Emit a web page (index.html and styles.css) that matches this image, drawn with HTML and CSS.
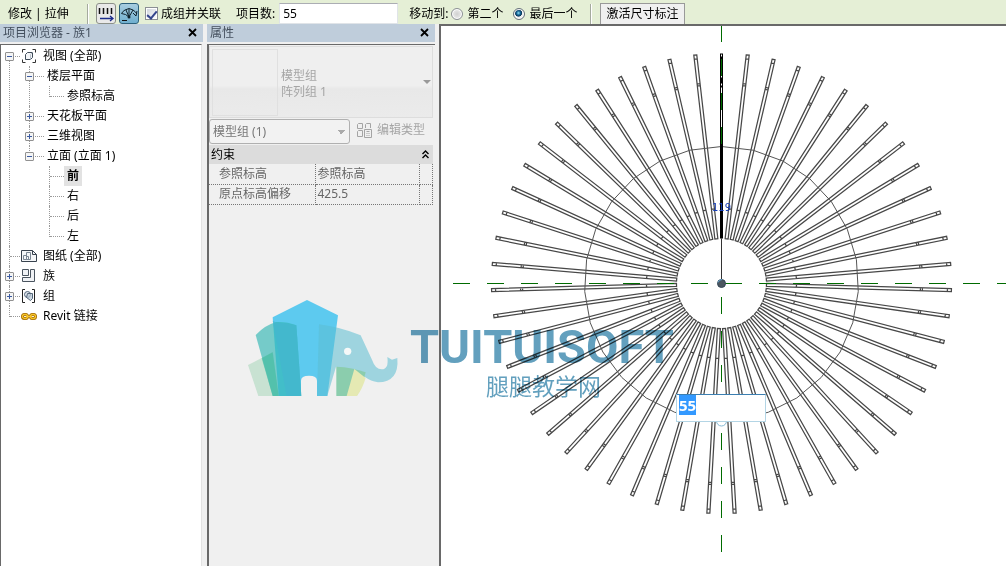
FILE: index.html
```html
<!DOCTYPE html>
<html lang="zh-CN">
<head>
<meta charset="utf-8">
<title>族1</title>
<link rel="stylesheet" href="styles.css">
</head>
<body>
<div class="app">
  <header class="options">
    <span class="mode">修改 | 拉伸</span>
    <span class="rule"></span>
    <button class="tool" type="button" aria-label="线性阵列">
      <svg width="18" height="20" viewBox="0 0 18 20"><path d="M2.500 4v6M6.500 4v6M10.500 4v6M14.500 4v6" stroke="#111" stroke-width="1.500"/><path d="M3 14.500h13M13 12l3 2.500-3 2.500" fill="none" stroke="#1c2c8c" stroke-width="1.300"/></svg>
    </button>
    <button class="tool tool-on" type="button" aria-label="半径阵列">
      <svg width="18" height="20" viewBox="0 0 18 20"><path d="M1.500 9.500Q3 7 5 6L9 4.500l4 1.500q3 2 4 4M1.500 9.500l4 1L9 13 6 6M9 13l4-7M9 5v7" fill="none" stroke="#10222c"/><path d="M13 9l3 3 1-5" fill="none" stroke="#10222c"/><circle cx="9" cy="13" r="1.500" fill="#10222c"/><path d="M2 16.500h5" stroke="#111"/></svg>
    </button>
    <label class="choice group"><input type="checkbox" checked><span>成组并关联</span></label>
    <label class="count"><span>项目数:</span><input type="text" value="55"></label>
    <div class="move" role="radiogroup" aria-label="移动到">
      <span>移动到:</span>
      <label class="choice"><input type="radio" name="move"><span>第二个</span></label>
      <label class="choice last"><input type="radio" name="move" checked><span>最后一个</span></label>
    </div>
    <span class="rule"></span>
    <button class="activate" type="button">激活尺寸标注</button>
  </header>

  <main class="work">
    <section class="panel browser">
      <div class="title"><h2>项目浏览器 - 族1</h2><button type="button" aria-label="关闭"><svg width="9" height="9" viewBox="0 0 9 9"><path d="M1 1l7 7M8 1l-7 7" stroke="#000" stroke-width="1.800"/></svg></button></div>
      <div class="panel-body tree-body">
        <ul class="tree">
          <li><div class="row"><span class="branch"><button type="button" class="exp" aria-label="折叠"></button></span>
            <svg class="icon" width="16" height="16" viewBox="0 0 16 16"><path d="M4.500 1.500h-3v3M11.500 1.500h3v3M1.500 11.500v3h3M14.500 11.500v3h-3" fill="none" stroke="#333"/><path d="M4.500 6.500l2-2h5v5l-2 2h-5z" fill="#f3f5f8" stroke="#3f4b59"/><path d="M9.500 11.500v-5l2-2" fill="none" stroke="#b8c0ca"/></svg><span class="name">视图 (全部)</span></div>
            <ul>
              <li><div class="row"><span class="branch"><button type="button" class="exp" aria-label="折叠"></button></span><span class="name">楼层平面</span></div>
                <ul><li><div class="row"><span class="branch"></span><span class="name">参照标高</span></div></li></ul></li>
              <li><div class="row"><span class="branch"><button type="button" class="exp plus" aria-label="展开"></button></span><span class="name">天花板平面</span></div></li>
              <li><div class="row"><span class="branch"><button type="button" class="exp plus" aria-label="展开"></button></span><span class="name">三维视图</span></div></li>
              <li><div class="row"><span class="branch"><button type="button" class="exp" aria-label="折叠"></button></span><span class="name">立面 (立面 1)</span></div>
                <ul>
                  <li><div class="row"><span class="branch"></span><span class="name current">前</span></div></li>
                  <li><div class="row"><span class="branch"></span><span class="name">右</span></div></li>
                  <li><div class="row"><span class="branch"></span><span class="name">后</span></div></li>
                  <li><div class="row"><span class="branch"></span><span class="name">左</span></div></li>
                </ul></li>
            </ul></li>
          <li><div class="row"><span class="branch"></span>
            <svg class="icon" width="16" height="16" viewBox="0 0 16 16"><path d="M.5 2.500h11l4 4v7H.5z" fill="#f4f6f8" stroke="#38424e"/><path d="M11.500 2.500v4h4" fill="none" stroke="#38424e"/><path d="M2.500 7.500h3v4h-3zM5.500 4.500h4v7h-4zM5.500 8.500h2v3" fill="none" stroke="#7b8794"/></svg><span class="name">图纸 (全部)</span></div></li>
          <li><div class="row"><span class="branch"><button type="button" class="exp plus" aria-label="展开"></button></span>
            <svg class="icon" width="16" height="16" viewBox="0 0 16 16"><path d="M1.500 1.500h6v6h-6zM9.500 1.500h4v12h-12v-4h8z" fill="#f0f2f5" stroke="#4a545f"/></svg><span class="name">族</span></div></li>
          <li><div class="row"><span class="branch"><button type="button" class="exp plus" aria-label="展开"></button></span>
            <svg class="icon" width="16" height="16" viewBox="0 0 16 16"><path d="M4 1.500H1.500v13H4M11 1.500h2.500v13H11" fill="none" stroke="#222"/><circle cx="6.500" cy="6.500" r="3" fill="#dde4ec" stroke="#536579"/><path d="M6.500 5.500h5v5l-2 2-4-3z" fill="#b8c7d6" fill-opacity=".7" stroke="#536579"/></svg><span class="name">组</span></div></li>
          <li><div class="row"><span class="branch"></span>
            <svg class="icon" width="16" height="16" viewBox="0 0 16 16"><g fill="none" stroke="#a36a00" stroke-width="3"><rect x="1.500" y="6.500" width="5" height="4" rx="2"/><rect x="9.500" y="6.500" width="5" height="4" rx="2"/></g><g fill="none" stroke="#f6c52c" stroke-width="1.300"><rect x="1.500" y="6.500" width="5" height="4" rx="2"/><rect x="9.500" y="6.500" width="5" height="4" rx="2"/><path d="M5 8.500h6"/></g></svg><span class="name">Revit 链接</span></div></li>
        </ul>
      </div>
    </section>

    <section class="panel props">
      <div class="title"><h2>属性</h2><button type="button" aria-label="关闭"><svg width="9" height="9" viewBox="0 0 9 9"><path d="M1 1l7 7M8 1l-7 7" stroke="#000" stroke-width="1.800"/></svg></button></div>
      <div class="panel-body">
        <button class="type" type="button" disabled>
          <span class="thumb"></span><span class="type-name">模型组<br>阵列组 1</span><span class="arrow"></span>
        </button>
        <div class="filter">
          <select aria-label="类别" disabled><option>模型组 (1)</option></select>
          <button class="edit" type="button" disabled>
            <svg width="17" height="17" viewBox="0 0 17 17" fill="none" stroke="#a4a4a4"><path d="M1.500 2.500l1-1h4v5h-5zM1.500 9.500l1-1h4v6h-5zM9.500 6V2.500l1-1h4V6M8.500 7.500h7v8h-7z"/><path d="M10.500 9.500h3M10.500 11.500h1M12.500 11.500h1M10.500 13.500h1M12.500 13.500h1"/></svg><span>编辑类型</span>
          </button>
        </div>
        <table class="grid">
          <colgroup><col class="c-name"><col><col class="c-end"></colgroup>
          <thead><tr><th colspan="2">约束</th><th><svg width="7" height="9" viewBox="0 0 7 9"><path d="M.5 4l3-3 3 3M.5 8l3-3 3 3" fill="none" stroke="#000" stroke-width="1.400"/></svg></th></tr></thead>
          <tbody><tr><td>参照标高</td><td>参照标高</td><td></td></tr><tr><td>原点标高偏移</td><td>425.5</td><td></td></tr></tbody>
        </table>
      </div>
    </section>

    <section class="canvas">
      <svg class="drawing" aria-label="前立面">
        <g id="array" transform="translate(280.500 257.500)" fill="none" stroke="#555">
          <g id="spokes" stroke="#484848" stroke-width="1.250"></g>
          <polygon id="path"/>
          <path d="M0-45V0" stroke="#333"/>
          <path d="M0-230V-45" stroke="#000" stroke-width="3"/>
          <path d="M0-229v2M0-224v18M0-200v2M0-196v56" stroke="#fff"/>
        </g>
        <g stroke="#006b00" stroke-dasharray="17">
          <path d="M12 257.500H2000"/>
          <path d="M280.500-1V118M280.500 271V526"/>
        </g>
        <circle cx="280.500" cy="257.500" r="4" fill="#4c5660" stroke="#334655"/>
        <path d="M277 256.500q1-3 4-3" fill="none" stroke="#66aedb"/>
        <text class="dimension" x="271" y="185">119</text>
        <circle cx="280.500" cy="395" r="5" fill="#fff" stroke="#85b9d4"/>
      </svg>
      <input class="edit-count" type="text" value="55" aria-label="阵列数">
    </section>
  </main>

  <div class="watermark elephant">
    <svg width="170" height="120" viewBox="0 0 510 360">
      <path d="M98 82L201 30l93 46-32 242h-31v-46q0-15-24-15t-24 15v46H116z" fill="#5dcaef"/>
      <path d="M237 103q64 8 125 33l34 73q10 29 29 29 22 0 17-37l14 8 16-5q6 72-58 73-22-3-38-15L288 230l-26 88h-31z" fill="#5bbdd2" fill-opacity=".55"/>
      <path d="M289 230q48 2 88 17-11 44-27 71h-61z" fill="#8bcdad"/>
      <path d="M343 237l34 27q-10 33-26 54h-31z" fill="#e5e9b3"/>
      <path d="M47 135q28-30 62-39 34-1 60 10l15 212H98z" fill="#35b8b4" fill-opacity=".66"/>
      <path d="M98 92l12 6q32-1 59 8l15 212h-44z" fill="#43b5d0" fill-opacity=".65"/>
      <path d="M24 225l74-38 18 131H55z" fill="#4eb878" fill-opacity=".25"/>
      <path d="M65 205l33-18 18 131H98z" fill="#40bda5" fill-opacity=".55"/>
      <circle cx="323" cy="184" r="11" fill="#f5f8f8"/>
    </svg>
  </div>
  <div class="watermark brand"><span class="brand-name">TUITUISOFT</span><span class="brand-sub">腿腿教学网</span></div>
</div>
<script src="array.js"></script>
</body>
</html>
```
FILE: styles.css
```css
* { box-sizing: border-box; }
body { margin: 0; font: 12px/16px "Noto Sans", "Noto Sans CJK SC", sans-serif; color: #000; background: #f0f0f0; }
button, input, select { font: inherit; color: inherit; margin: 0; padding: 0; }
h2 { margin: 0; font: inherit; }
ul { list-style: none; margin: 0; padding: 0; }
.app { position: relative; display: flex; flex-direction: column; height: 100vh; overflow: hidden; }

.options { display: flex; align-items: center; height: 24px; flex: none; background: #e5efd6; padding: 3px 8px 0; white-space: nowrap; }
.mode { width: 79px; }
.rule { width: 1px; height: 20px; background: #a5aa9e; box-shadow: 1px 0 #fff; }
.tool { width: 20px; height: 21px; margin-left: 3px; border: 1px solid #8c9088; border-radius: 3px; background: #e9e9e9; display: flex; align-items: center; justify-content: center; }
.rule + .tool { margin-left: 8px; }
.tool svg { flex: none; }
.tool-on { background: linear-gradient(#a8cde0, #70afcf); border-color: #2d607c; }
.choice { display: flex; align-items: center; gap: 4px; }
.choice input { appearance: none; width: 12px; height: 12px; border: 1px solid #8b8f94; background: #f1f1f1; }
.choice input[type=checkbox] { width: 13px; height: 13px; background: linear-gradient(135deg, #ccd2da, #fff); box-shadow: inset 0 0 0 1px #fff; display: grid; place-items: center; }
.choice input[type=checkbox]:checked::after { content: ""; width: 4px; height: 8px; border: solid #34458c; border-width: 0 2px 2px 0; transform: rotate(40deg); }
.choice input[type=radio] { border-radius: 50%; background: radial-gradient(#d0d0d0, #f8f8f8); box-shadow: inset 0 0 0 1px #fff; }
.choice input[type=radio]:checked { background: radial-gradient(circle at 45% 40%, #8de0f8 0, #146292 25%, #0b3557 40%, #eee 48%); border-color: #667079; }
.group { margin-left: 6px; gap: 3px; }
.count { display: flex; align-items: center; gap: 4px; margin-left: 15px; }
.count input { width: 119px; height: 21px; border: 1px solid #e0e4e8; border-top-color: #abadb3; padding: 0 3px; background: #fff; }
.move { display: flex; align-items: center; gap: 3px; margin: 0 13px 0 11px; }
.last { margin-left: 7px; }
.activate { height: 21px; margin-left: 9px; padding: 0 5px; border: 1px solid #999; border-bottom: 0; background: #f0f0f0; }

.work { display: flex; flex: 1; min-height: 0; }
.panel { display: flex; flex-direction: column; flex: none; }
.browser { width: 203px; margin-right: 4px; }
.props { width: 228px; margin-right: 4px; }
.title { display: flex; align-items: center; justify-content: space-between; height: 18px; margin-bottom: 2px; padding: 0 5px 0 3px; background: #bfcddb; color: #44505e; }
.title button { width: 10px; height: 10px; border: 0; background: none; display: flex; }
.panel-body { flex: 1; border-top: 1px solid #696969; border-left: 1px solid #696969; padding-top: 1px; }
.props .panel-body { border-left-width: 2px; }
.tree-body { background: #fff; border-right: 1px solid #e3e3e3; margin-right: 1px; }

.tree ul { margin-left: 20px; }
.tree li { position: relative; }
.tree li::before { content: ""; position: absolute; left: 8px; top: 0; bottom: 0; border-left: 1px dotted #999; }
.tree > li:first-child::before { top: 10px; }
.tree li:last-child::before { bottom: auto; height: 11px; }
.row { display: flex; align-items: center; height: 20px; }
.branch { position: relative; width: 19px; height: 9px; padding-left: 4px; flex: none; }
.branch::before { content: ""; position: absolute; left: 9px; right: 0; top: 4px; border-top: 1px dotted #999; }
.tree ul .branch { width: 23px; }
.exp { position: relative; display: block; width: 9px; height: 9px; border: 1px solid #919191; border-radius: 1px; background: linear-gradient(#3b5aa0, #3b5aa0) center / 5px 1px no-repeat, #f5f5f5; }
.plus { background: linear-gradient(#3b5aa0, #3b5aa0) center / 5px 1px no-repeat, linear-gradient(#3b5aa0, #3b5aa0) center / 1px 5px no-repeat, #f5f5f5; }
.icon { margin: 0 3px 0 1px; flex: none; }
.name { padding: 2px 3px; white-space: nowrap; }
.current { background: #e2e2e2; font-weight: bold; }

.type { display: flex; align-items: center; width: 224px; height: 72px; padding: 1px 2px; border: 1px solid #ddd; background: linear-gradient(#efefef 55%, #e8e8e8 60%, #ebebeb); color: #a5a5a5; text-align: left; }
.thumb { width: 66px; height: 67px; border: 1px solid #e0e0e0; margin-right: 3px; }
.type-name { flex: 1; padding-top: 3px; }
.arrow { border: 4px solid transparent; border-top-color: #999; border-bottom: 0; margin-right: -1px; }
.filter { display: flex; align-items: center; height: 27px; gap: 6px; }
.filter select { width: 141px; height: 25px; appearance: none; border: 1px solid #b0b0b0; border-radius: 3px; padding: 0 3px; color: #777; opacity: 1; background: linear-gradient(45deg, transparent 50%, #aaa 50%) right 8px center / 4px 4px no-repeat, linear-gradient(315deg, transparent 50%, #aaa 50%) right 4px center / 4px 4px no-repeat, #f2f2f2; }
.edit { display: flex; align-items: center; gap: 4px; padding-bottom: 3px; border: 0; background: none; color: #a5a5a5; }
.grid { width: 224px; table-layout: fixed; border-collapse: collapse; color: #666; }
.c-name { width: 106px; }
.c-end { width: 13px; }
.grid th { height: 19px; padding: 0 0 0 2px; background: #dcdcdc; color: #000; font-weight: normal; text-align: left; }
.grid td { height: 20px; padding: 0 2px; border-right: 1px dotted #777; border-bottom: 1px dotted #777; }
.grid td:first-child { padding-left: 10px; }

.canvas { position: relative; flex: 1; min-width: 0; background: #fff; border: solid #696969; border-width: 2px 0 0 2px; overflow: hidden; }
.drawing { display: block; width: 100%; height: 100%; }
.dimension { font: 10px "DejaVu Sans", sans-serif; fill: #143cb4; }
.edit-count { position: absolute; left: 235px; top: 368px; width: 90px; height: 28px; padding: 0 2px 6px; border: 1px solid #b3d5e5; border-top-color: #3c7fb1; outline: 0; background: #fff; font: bold 15px/18px "Noto Sans", sans-serif; }
.edit-count::selection { background: #3399ff; color: #fff; }

.watermark { position: absolute; pointer-events: none; }
.elephant { left: 240px; top: 290px; }
.brand { left: 410px; top: 323px; display: flex; flex-direction: column; color: #63a0be; mix-blend-mode: multiply; }
.brand-name { font: bold 47px/48px Roboto, sans-serif; }
.brand-sub { padding-left: 76px; font: 23px/28px "Noto Sans CJK SC", sans-serif; }
```
FILE: array.js
```js
const COUNT = 55;
const spokes = document.getElementById("spokes");
let markup = "";
for (let i = 1; i < COUNT; i++) {
  markup += `<path transform="rotate(${i * 360 / COUNT})" d="M-1.500-230h3V-45h-3zM-1.500-226h3M-1.500-201h3M-1.500-199h3M-1.500-75h3"/>`;
}
spokes.innerHTML = markup;

const SIDES = 27;
const points = [];
for (let i = 0; i < SIDES; i++) {
  const a = i * 2 * Math.PI / SIDES;
  points.push(`${137 * Math.sin(a)},${-137 * Math.cos(a)}`);
}
document.getElementById("path").setAttribute("points", points.join(" "));

const field = document.querySelector(".edit-count");
field.focus();
field.select();
```
